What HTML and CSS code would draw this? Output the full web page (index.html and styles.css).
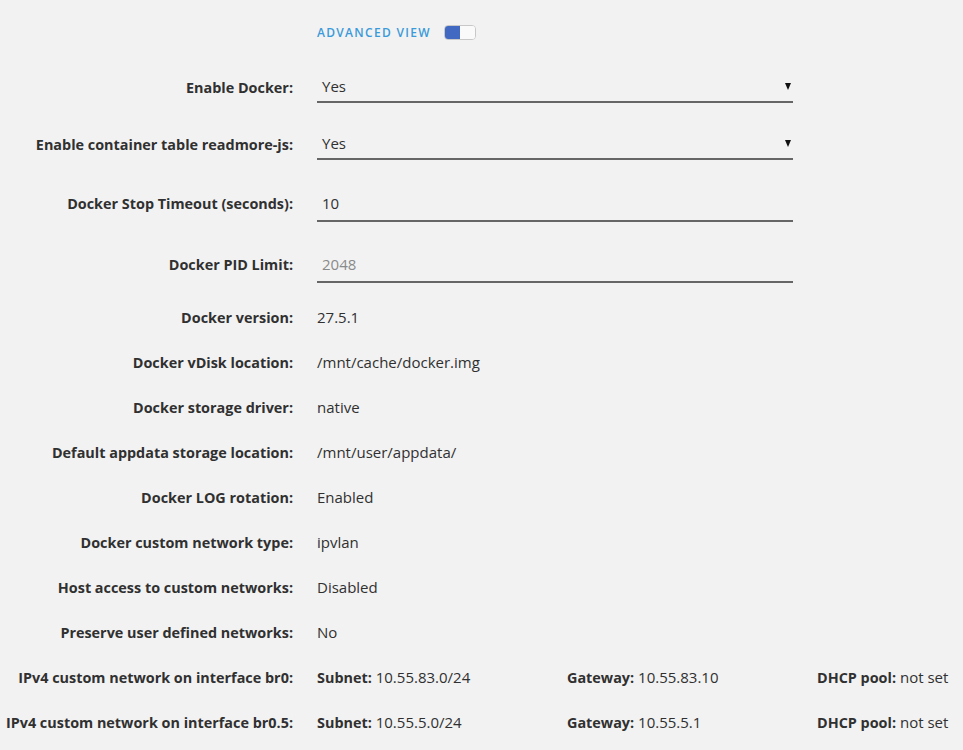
FILE: index.html
```html
<!DOCTYPE html>
<html lang="en">
<head>
  <meta charset="UTF-8">
  <title>Docker Settings</title>
  <meta name="viewport" content="width=device-width, initial-scale=1.0">
  <link rel="stylesheet" href="styles.css">
</head>
<body>
  <div class="settings">
    <!-- advanced view switch -->
    <div class="row row-view">
      <span class="label"></span>
      <div class="value">
        <span class="view-text">ADVANCED VIEW</span>
        <span class="switch"><span class="switch-on"></span><span class="switch-knob"></span></span>
      </div>
    </div>

    <div class="row row-input">
      <span class="label">Enable Docker:</span>
      <div class="value">
        <div class="select"><span>Yes</span><span class="arrow"></span></div>
      </div>
    </div>

    <div class="row row-input row-sel2">
      <span class="label">Enable container table readmore-js:</span>
      <div class="value">
        <div class="select"><span>Yes</span><span class="arrow"></span></div>
      </div>
    </div>

    <div class="row row-input row-stop">
      <span class="label">Docker Stop Timeout (seconds):</span>
      <div class="value">
        <div class="text-input">10</div>
      </div>
    </div>

    <div class="row row-input row-pid">
      <span class="label">Docker PID Limit:</span>
      <div class="value">
        <div class="text-input placeholder">2048</div>
      </div>
    </div>

    <div class="row">
      <span class="label">Docker version:</span>
      <div class="value">27.5.1</div>
    </div>
    <div class="row">
      <span class="label">Docker vDisk location:</span>
      <div class="value">/mnt/cache/docker.img</div>
    </div>
    <div class="row">
      <span class="label">Docker storage driver:</span>
      <div class="value">native</div>
    </div>
    <div class="row">
      <span class="label">Default appdata storage location:</span>
      <div class="value">/mnt/user/appdata/</div>
    </div>
    <div class="row">
      <span class="label">Docker LOG rotation:</span>
      <div class="value">Enabled</div>
    </div>
    <div class="row">
      <span class="label">Docker custom network type:</span>
      <div class="value">ipvlan</div>
    </div>
    <div class="row">
      <span class="label">Host access to custom networks:</span>
      <div class="value">Disabled</div>
    </div>
    <div class="row">
      <span class="label">Preserve user defined networks:</span>
      <div class="value">No</div>
    </div>

    <!-- custom networks -->
    <div class="row">
      <span class="label">IPv4 custom network on interface br0:</span>
      <div class="value net">
        <span class="net-cell"><b>Subnet:</b> 10.55.83.0/24</span>
        <span class="net-cell"><b>Gateway:</b> 10.55.83.10</span>
        <span class="net-cell"><b>DHCP pool:</b> not set</span>
      </div>
    </div>
    <div class="row">
      <span class="label">IPv4 custom network on interface br0.5:</span>
      <div class="value net">
        <span class="net-cell"><b>Subnet:</b> 10.55.5.0/24</span>
        <span class="net-cell"><b>Gateway:</b> 10.55.5.1</span>
        <span class="net-cell"><b>DHCP pool:</b> not set</span>
      </div>
    </div>
  </div>
</body>
</html>
```

FILE: styles.css
```css
body {
  margin: 0; padding: 0;
  font-family: "Open Sans", "Noto Sans", sans-serif;
  font-size: 15px;
  background-color: #f2f2f2;
  color: #303030;
  overflow: hidden;
}

.settings {
  padding-top: 22px;
  display: flex;
  flex-direction: column;
}

.row {
  display: flex;
  align-items: center;
  min-height: 30px;
  margin-bottom: 15px;
}
.label {
  width: 293px;
  flex-shrink: 0;
  text-align: right;
  font-size: 14.4px;
  font-weight: 700;
}
.value {
  margin-left: 24px;
}

/* advanced view */
.row-view {
  min-height: 20px;
  margin-bottom: 29px;
}
.row-view .value {
  display: flex;
  align-items: center;
}
.view-text {
  font-size: 12px;
  font-weight: 600;
  letter-spacing: 1.3px;
  color: #3b9ad9;
}
.switch {
  display: flex;
  margin-left: 13px;
  width: 30px;
  height: 13px;
  border: 1px solid #c8c8c8;
  border-radius: 4px;
  overflow: hidden;
  background: #fff;
}
.switch-on {
  width: 15px;
  background: #4169c2;
}
.switch-knob {
  flex: 1;
  background: #fafafa;
}

/* inputs */
.row-input {
  min-height: 32px;
  margin-bottom: 25px;
}
.row-sel2 { margin-bottom: 26px; }
.row-stop { margin-bottom: 25px; }
.row-pid { margin-bottom: 19px; }

.select, .text-input {
  width: 466px;
  height: 30px;
  line-height: 30px;
  padding: 0 5px;
  border-bottom: 2px solid #666;
  display: flex;
  justify-content: space-between;
  align-items: center;
}
.text-input {
  height: 34px;
  line-height: 34px;
}
.row-stop .label, .row-pid .label {
  margin-bottom: 2px;
}
.arrow {
  width: 0;
  height: 0;
  margin-right: -3px;
  border-left: 3.5px solid transparent;
  border-right: 3.5px solid transparent;
  border-top: 7px solid #111;
}
.placeholder {
  color: #8a8a8a;
}

/* network rows */
.net {
  display: flex;
}
.net-cell {
  width: 250px;
  white-space: nowrap;
}
.net-cell:last-child {
  width: auto;
}
.net-cell b {
  font-size: 14.4px;
  font-weight: 700;
}
```
